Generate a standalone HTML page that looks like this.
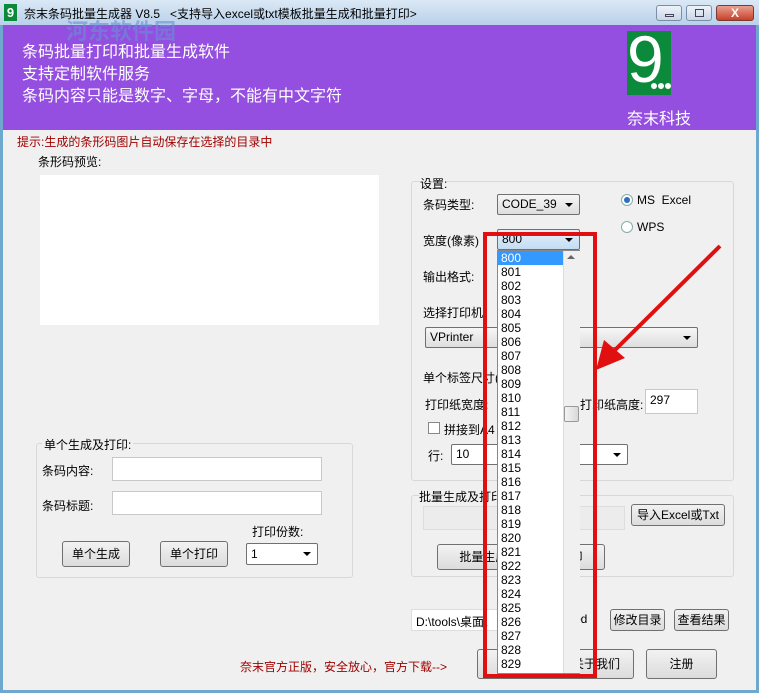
<!DOCTYPE html>
<html><head><meta charset="utf-8"><style>
*{margin:0;padding:0;box-sizing:border-box}
body{width:759px;height:693px;overflow:hidden;background:#6fa8cf;font-family:"Liberation Sans","Noto Sans CJK SC",sans-serif;font-size:12px;color:#000;position:relative}
.a{position:absolute}
.btn{position:absolute;border:1px solid #707070;border-radius:3px;background:linear-gradient(#f2f2f2,#dcdcdc);text-align:center;font-size:12px}
.inp{position:absolute;background:#fff;border:1px solid #c8c8c8}
.cb{position:absolute;border:1px solid #707070;border-radius:2px;background:linear-gradient(#f6f6f6,#dedede);font-size:12px;padding-left:4px}
.cb:after{content:"";position:absolute;right:6px;top:50%;margin-top:-2px;border-left:4px solid transparent;border-right:4px solid transparent;border-top:4px solid #000}
.grp{position:absolute;border:1px solid #d8d8d8;border-radius:3px}
.li{height:14px;line-height:14px;padding-left:3px;font-size:12px}
.dot{position:absolute;width:6px;height:6px;border-radius:50%;background:#fff}
</style></head><body>
<div class="a" style="left:0;top:0;width:759px;height:25px;background:linear-gradient(#dbe8f5,#b9d1ea)"></div>
<div class="a" style="left:4px;top:4px;width:13px;height:17px;background:#0a8a3a;color:#fff;font-size:13px;line-height:17px;text-align:center;font-weight:bold">9</div>
<div class="a" style="left:24px;top:5px;font-size:12px">奈末条码批量生成器 V8.5 &nbsp;&nbsp;&lt;支持导入excel或txt模板批量生成和批量打印&gt;</div>
<div class="a" style="left:656px;top:5px;width:26px;height:16px;border:1px solid #7a8ea8;border-radius:3px;background:linear-gradient(#eef3fa,#c9d7e8)"><div style="margin:8px 0 0 8px;width:9px;height:3px;border:1px solid #445"></div></div>
<div class="a" style="left:686px;top:5px;width:26px;height:16px;border:1px solid #7a8ea8;border-radius:3px;background:linear-gradient(#eef3fa,#c9d7e8)"><div style="margin:3px 0 0 8px;width:9px;height:8px;border:1px solid #445"></div></div>
<div class="a" style="left:716px;top:5px;width:38px;height:16px;border:1px solid #7a3a30;border-radius:3px;background:linear-gradient(#e8a090,#c8402a);color:#fff;text-align:center;font-size:12px;line-height:14px;font-weight:bold">X</div>
<div class="a" style="left:3px;top:25px;width:753px;height:105px;background:#944ee0"></div>
<div class="a" style="left:66px;top:14px;font-size:22px;color:#6a8fd8;font-weight:bold;opacity:.6">河东软件园</div>
<div class="a" style="left:22px;top:42px;font-size:16px;color:#fff;line-height:22px">条码批量打印和批量生成软件<br>支持定制软件服务<br>条码内容只能是数字、字母，不能有中文字符</div>
<div class="a" style="left:627px;top:31px;width:44px;height:64px;background:#0a8a3a;overflow:hidden">
<div class="a" style="left:0;top:-10px;color:#fff;font-size:66px;line-height:76px">9</div>
<div class="dot" style="left:24px;top:52px"></div><div class="dot" style="left:31px;top:52px"></div><div class="dot" style="left:38px;top:52px"></div>
</div>
<div class="a" style="left:627px;top:105px;font-size:16px;color:#fff">奈末科技</div>
<div class="a" style="left:3px;top:130px;width:753px;height:560px;background:#f0f0f0"></div>
<div class="a" style="left:17px;top:133px;color:#a00000;font-size:12px">提示:生成的条形码图片自动保存在选择的目录中</div>
<div class="a" style="left:38px;top:153px">条形码预览:</div>
<div class="a" style="left:40px;top:175px;width:339px;height:150px;background:#fff"></div>
<div class="grp" style="left:36px;top:443px;width:317px;height:135px"></div>
<div class="a" style="left:42px;top:436px;background:#f0f0f0;padding:0 2px">单个生成及打印:</div>
<div class="a" style="left:42px;top:462px">条码内容:</div>
<div class="inp" style="left:112px;top:457px;width:210px;height:24px"></div>
<div class="a" style="left:42px;top:497px">条码标题:</div>
<div class="inp" style="left:112px;top:491px;width:210px;height:24px"></div>
<div class="a" style="left:252px;top:523px">打印份数:</div>
<div class="btn" style="left:62px;top:541px;width:68px;height:26px;line-height:24px">单个生成</div>
<div class="btn" style="left:160px;top:541px;width:68px;height:26px;line-height:24px">单个打印</div>
<div class="cb" style="left:246px;top:543px;width:72px;height:22px;line-height:20px;background:#fff">1</div>
<div class="grp" style="left:411px;top:181px;width:323px;height:300px"></div>
<div class="a" style="left:420px;top:175px;background:#f0f0f0">设置:</div>
<div class="a" style="left:423px;top:196px">条码类型:</div>
<div class="cb" style="left:497px;top:194px;width:83px;height:21px;line-height:19px">CODE_39</div>
<div class="a" style="left:621px;top:194px;width:12px;height:12px;border:1px solid #8aa;border-radius:50%;background:#fff"><div style="margin:2px;width:6px;height:6px;border-radius:50%;background:#2a6fc0"></div></div>
<div class="a" style="left:637px;top:193px">MS &nbsp;Excel</div>
<div class="a" style="left:621px;top:221px;width:12px;height:12px;border:1px solid #8aa;border-radius:50%;background:#fff"></div>
<div class="a" style="left:637px;top:220px">WPS</div>
<div class="a" style="left:423px;top:232px">宽度(像素)</div>
<div class="cb" style="left:497px;top:229px;width:83px;height:21px;line-height:19px;background:linear-gradient(#e6f1fb,#c3dcf3)">800</div>
<div class="a" style="left:423px;top:268px">输出格式:</div>
<div class="a" style="left:423px;top:304px">选择打印机:</div>
<div class="cb" style="left:425px;top:327px;width:273px;height:21px;line-height:19px">VPrinter</div>
<div class="a" style="left:423px;top:369px">单个标签尺寸(</div>
<div class="a" style="left:425px;top:396px">打印纸宽度:</div>
<div class="a" style="left:580px;top:396px">打印纸高度:</div>
<div class="inp" style="left:645px;top:389px;width:53px;height:25px;padding:3px 4px">297</div>
<div class="a" style="left:428px;top:422px;width:12px;height:12px;border:1px solid #888;background:#fff"></div>
<div class="a" style="left:444px;top:421px">拼接到A4</div>
<div class="a" style="left:428px;top:447px">行:</div>
<div class="cb" style="left:451px;top:444px;width:177px;height:21px;line-height:19px;background:#fff">10</div>
<div class="grp" style="left:411px;top:495px;width:323px;height:82px"></div>
<div class="a" style="left:419px;top:488px;background:#f0f0f0">批量生成及打印</div>
<div class="inp" style="left:423px;top:506px;width:202px;height:24px;background:#ececec;border-color:#ddd"></div>
<div class="btn" style="left:631px;top:504px;width:94px;height:22px;line-height:20px">导入Excel或Txt</div>
<div class="btn" style="left:437px;top:544px;width:168px;height:26px;line-height:24px">批量生成 &nbsp;&nbsp;&nbsp;&nbsp;&nbsp;&nbsp;&nbsp;&nbsp;&nbsp;&nbsp;&nbsp;&nbsp;&nbsp;&nbsp;&nbsp;&nbsp;&nbsp;&nbsp;印</div>
<div class="inp" style="left:411px;top:609px;width:163px;height:22px;padding:3px 4px;border-color:#ddd">D:\tools\桌面\</div>
<div class="a" style="left:574px;top:612px">od</div>
<div class="btn" style="left:610px;top:609px;width:55px;height:22px;line-height:20px">修改目录</div>
<div class="btn" style="left:674px;top:609px;width:55px;height:22px;line-height:20px">查看结果</div>
<div class="a" style="left:240px;top:658px;color:#a00000">奈末官方正版，安全放心，官方下载--&gt;</div>
<div class="btn" style="left:477px;top:649px;width:74px;height:30px;line-height:28px">访</div>
<div class="btn" style="left:538px;top:649px;width:96px;height:30px;line-height:28px;padding-left:20px">关于我们</div>
<div class="btn" style="left:646px;top:649px;width:71px;height:30px;line-height:28px">注册</div>
<div class="a" style="left:497px;top:250px;width:83px;height:424px;background:#fff;border:1px solid #888">
<div class="a" style="left:65px;top:0;width:17px;height:422px;background:#f0f0f0;border-left:1px solid #ddd"></div>
<div class="a" style="left:69px;top:4px;border-left:4px solid transparent;border-right:4px solid transparent;border-bottom:4px solid #666"></div>
<div class="a" style="left:66px;top:155px;width:15px;height:16px;border:1px solid #999;border-radius:2px;background:linear-gradient(90deg,#f4f4f4,#d8d8d8)"></div>
<div style="width:65px">
<div class="li" style="background:#3399ff;color:#fff">800</div><div class="li">801</div><div class="li">802</div><div class="li">803</div><div class="li">804</div><div class="li">805</div><div class="li">806</div><div class="li">807</div><div class="li">808</div><div class="li">809</div><div class="li">810</div><div class="li">811</div><div class="li">812</div><div class="li">813</div><div class="li">814</div><div class="li">815</div><div class="li">816</div><div class="li">817</div><div class="li">818</div><div class="li">819</div><div class="li">820</div><div class="li">821</div><div class="li">822</div><div class="li">823</div><div class="li">824</div><div class="li">825</div><div class="li">826</div><div class="li">827</div><div class="li">828</div><div class="li">829</div>
</div></div>
<div class="a" style="left:483px;top:232px;width:114px;height:446px;border:4px solid #e01010"></div>
<svg class="a" style="left:590px;top:240px" width="140" height="135"><line x1="130" y1="6" x2="20" y2="115" stroke="#e01010" stroke-width="4"/><polygon points="6,130 14,100 35,118" fill="#e01010"/></svg>
</body></html>
